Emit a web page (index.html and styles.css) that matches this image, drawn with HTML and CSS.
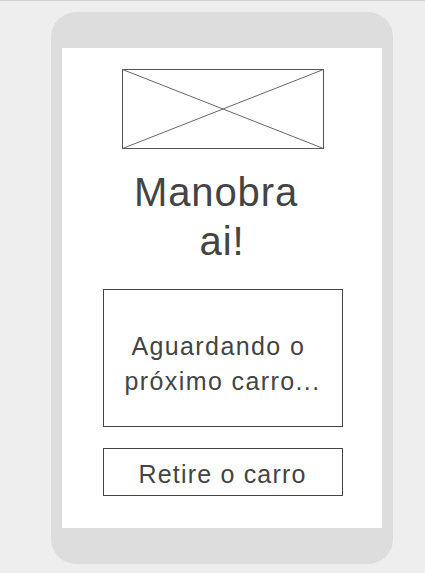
FILE: index.html
```html
<!DOCTYPE html>
<html>
<head>
<meta charset="utf-8">
<link rel="stylesheet" href="styles.css">
</head>
<body>
<div class="page">
  <div class="phone">
    <div class="screen">
      <svg class="placeholder" width="202" height="80" viewBox="0 0 202 80">
        <rect x="0.5" y="0.5" width="201" height="79" fill="#fff" stroke="#555" stroke-width="1"/>
        <line x1="0.5" y1="0.5" x2="201.5" y2="79.5" stroke="#666" stroke-width="1"/>
        <line x1="0.5" y1="79.5" x2="201.5" y2="0.5" stroke="#666" stroke-width="1"/>
      </svg>
      <h1 class="title">Manobra 
ai!</h1>
      <div class="status">
        <p class="status-text">Aguardando o 
próximo carro...</p>
      </div>
      <div class="action">Retire o carro</div>
    </div>
  </div>
</div>
</body>
</html>
```

FILE: styles.css
```css
html, body {
  margin: 0;
  padding: 0;
}
body {
  background: #eeeeee;
  font-family: "Liberation Sans", Arial, sans-serif;
  color: #444444;
}
.page {
  border-top: 1px solid #d2d2d2;
  height: 573px;
  padding-left: 51px;
  padding-top: 11px;
  box-sizing: border-box;
}
.phone {
  width: 342px;
  height: 552px;
  background: #dddddd;
  border-radius: 25px;
  padding: 36px 11px;
  box-sizing: border-box;
}
.screen {
  background: #ffffff;
  width: 320px;
  height: 480px;
  display: flex;
  flex-direction: column;
  align-items: center;
  padding-top: 21px;
  box-sizing: border-box;
}
.placeholder {
  display: block;
  margin-left: 1px;
}
.title {
  margin: 19px 0 0 0;
  font-size: 40px;
  font-weight: normal;
  line-height: 49px;
  letter-spacing: 0.9px;
  text-align: center;
  white-space: pre;
}
.status {
  margin-top: 23px;
  margin-left: 1px;
  width: 240px;
  height: 138px;
  box-sizing: border-box;
  border: 1px solid #444444;
  padding-top: 12px;
  display: flex;
  align-items: center;
  justify-content: center;
}
.status-text {
  margin: 0;
  font-size: 25px;
  line-height: 35px;
  letter-spacing: 1.4px;
  text-align: center;
  white-space: pre;
}
.action {
  margin-top: 21px;
  margin-left: 1px;
  width: 240px;
  height: 48px;
  box-sizing: border-box;
  border: 1px solid #444444;
  padding-top: 4px;
  font-size: 25px;
  letter-spacing: 1.2px;
  display: flex;
  align-items: center;
  justify-content: center;
}
```
